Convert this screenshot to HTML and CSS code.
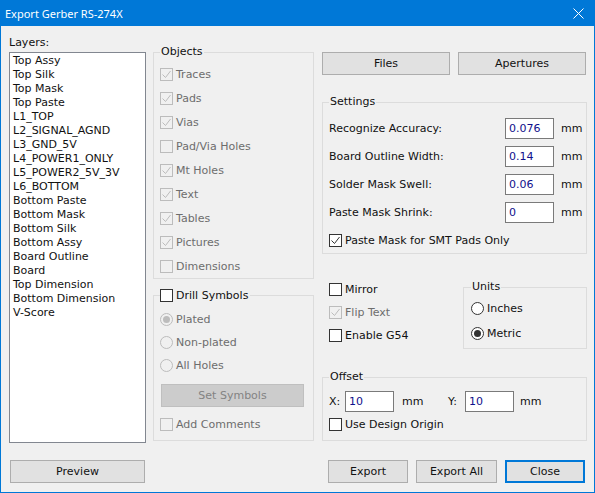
FILE: index.html
```html
<!DOCTYPE html>
<html>
<head>
<meta charset="utf-8">
<link rel="stylesheet" href="styles.css">
</head>
<body>
<div class="window">
  <div class="titlebar">
    <span class="title">Export Gerber RS-274X</span>
    <svg class="close-x" width="11" height="11" viewBox="0 0 11 11"><path d="M0.5 0.5 L10.5 10.5 M10.5 0.5 L0.5 10.5" stroke="#fff" stroke-width="1" fill="none"/></svg>
  </div>
  <div class="content">
    <div class="col col-layers">
      <div class="label">Layers:</div>
      <ul class="listbox">
        <li>Top Assy</li>
        <li>Top Silk</li>
        <li>Top Mask</li>
        <li>Top Paste</li>
        <li>L1_TOP</li>
        <li>L2_SIGNAL_AGND</li>
        <li>L3_GND_5V</li>
        <li>L4_POWER1_ONLY</li>
        <li>L5_POWER2_5V_3V</li>
        <li>L6_BOTTOM</li>
        <li>Bottom Paste</li>
        <li>Bottom Mask</li>
        <li>Bottom Silk</li>
        <li>Bottom Assy</li>
        <li>Board Outline</li>
        <li>Board</li>
        <li>Top Dimension</li>
        <li>Bottom Dimension</li>
        <li>V-Score</li>
      </ul>
      <div class="btn btn-preview">Preview</div>
    </div>

    <div class="col col-objects">
      <fieldset class="group group-objects">
        <legend>Objects</legend>
        <div class="check disabled"><span class="box"><svg viewBox="0 0 11 11"><path d="M1.5 5.5 L4.5 8.5 L9.5 2" /></svg></span>Traces</div>
        <div class="check disabled"><span class="box"><svg viewBox="0 0 11 11"><path d="M1.5 5.5 L4.5 8.5 L9.5 2" /></svg></span>Pads</div>
        <div class="check disabled"><span class="box"><svg viewBox="0 0 11 11"><path d="M1.5 5.5 L4.5 8.5 L9.5 2" /></svg></span>Vias</div>
        <div class="check disabled"><span class="box"></span>Pad/Via Holes</div>
        <div class="check disabled"><span class="box"><svg viewBox="0 0 11 11"><path d="M1.5 5.5 L4.5 8.5 L9.5 2" /></svg></span>Mt Holes</div>
        <div class="check disabled"><span class="box"><svg viewBox="0 0 11 11"><path d="M1.5 5.5 L4.5 8.5 L9.5 2" /></svg></span>Text</div>
        <div class="check disabled"><span class="box"><svg viewBox="0 0 11 11"><path d="M1.5 5.5 L4.5 8.5 L9.5 2" /></svg></span>Tables</div>
        <div class="check disabled"><span class="box"><svg viewBox="0 0 11 11"><path d="M1.5 5.5 L4.5 8.5 L9.5 2" /></svg></span>Pictures</div>
        <div class="check disabled"><span class="box"></span>Dimensions</div>
      </fieldset>

      <fieldset class="group group-drill">
        <legend><span class="check legend-check"><span class="box"></span>Drill Symbols</span></legend>
        <div class="radio disabled"><span class="circle"><span class="dot"></span></span>Plated</div>
        <div class="radio disabled"><span class="circle"></span>Non-plated</div>
        <div class="radio disabled"><span class="circle"></span>All Holes</div>
        <div class="btn btn-disabled btn-symbols">Set Symbols</div>
        <div class="check disabled add-comments"><span class="box"></span>Add Comments</div>
      </fieldset>
    </div>

    <div class="col col-settings">
      <div class="top-buttons">
        <div class="btn btn-top">Files</div>
        <div class="btn btn-top">Apertures</div>
      </div>

      <fieldset class="group group-settings">
        <legend>Settings</legend>
        <div class="setting-row"><span>Recognize Accuracy:</span><span class="field">0.076</span><span class="unit">mm</span></div>
        <div class="setting-row"><span>Board Outline Width:</span><span class="field">0.14</span><span class="unit">mm</span></div>
        <div class="setting-row"><span>Solder Mask Swell:</span><span class="field">0.06</span><span class="unit">mm</span></div>
        <div class="setting-row"><span>Paste Mask Shrink:</span><span class="field">0</span><span class="unit">mm</span></div>
        <div class="check check-smt"><span class="box"><svg viewBox="0 0 11 11"><path d="M1.5 5.5 L4.5 8.5 L9.5 2" /></svg></span>Paste Mask for SMT Pads Only</div>
      </fieldset>

      <div class="options">
        <div class="options-checks">
          <div class="check row23"><span class="box"></span>Mirror</div>
          <div class="check disabled row23"><span class="box"><svg viewBox="0 0 11 11"><path d="M1.5 5.5 L4.5 8.5 L9.5 2" /></svg></span>Flip Text</div>
          <div class="check row23"><span class="box"></span>Enable G54</div>
        </div>
        <fieldset class="group group-units">
          <legend>Units</legend>
          <div class="radio row25"><span class="circle"></span>Inches</div>
          <div class="radio row25"><span class="circle"><span class="dot"></span></span>Metric</div>
        </fieldset>
      </div>

      <fieldset class="group group-offset">
        <legend>Offset</legend>
        <div class="offset-row">
          <span>X:</span><span class="field">10</span><span class="unit-x">mm</span>
          <span>Y:</span><span class="field">10</span><span class="unit-y">mm</span>
        </div>
        <div class="check row23"><span class="box"></span>Use Design Origin</div>
      </fieldset>

      <div class="footer">
        <div class="btn btn-foot">Export</div>
        <div class="btn btn-foot btn-wide">Export All</div>
        <div class="btn btn-foot btn-default">Close</div>
      </div>
    </div>
  </div>
</div>
</body>
</html>
```

FILE: styles.css
```css
html, body {
  margin: 0;
  padding: 0;
  background: #f0f0f0;
}
body {
  font-family: "DejaVu Sans", sans-serif;
  font-size: 11px;
  line-height: 13px;
  color: #111;
}
.window {
  width: 595px;
  height: 493px;
  box-sizing: border-box;
  border: 1px solid #0078d7;
  border-top: none;
  background: #f0f0f0;
  display: flex;
  flex-direction: column;
}
.titlebar {
  height: 26px;
  flex: none;
  background: #0078d7;
  color: #fff;
  display: flex;
  align-items: center;
  justify-content: space-between;
  padding: 0 10px 0 4px;
  font-family: "Noto Sans", sans-serif;
  font-size: 11px;
}
.close-x {
  display: block;
}
.content {
  display: flex;
  padding: 0 7px 0 8px;
}
.col {
  display: flex;
  flex-direction: column;
}
.col-layers {
  width: 137px;
  margin-right: 7px;
  padding-top: 10px;
}
.col-objects {
  width: 161px;
  margin-right: 8px;
  padding-top: 20px;
}
.col-settings {
  width: 265px;
  padding-top: 26px;
}
.label {
  height: 13px;
  margin-bottom: 3px;
}
.listbox {
  list-style: none;
  margin: 0;
  height: 391px;
  box-sizing: border-box;
  border: 1px solid #828790;
  background: #fff;
  padding: 1px 0 0 3px;
}
.listbox li {
  line-height: 14px;
  height: 14px;
  white-space: nowrap;
}
.btn {
  height: 23px;
  box-sizing: border-box;
  border: 1px solid #adadad;
  background: #e1e1e1;
  display: flex;
  align-items: center;
  justify-content: center;
}
.btn-preview {
  margin: 17px 1px 0;
}
.btn-disabled {
  background: #cccccc;
  border-color: #bfbfbf;
  color: #838383;
}
.group {
  margin: 0;
  border: 1px solid #dcdcdc;
  padding: 0 0 0 6px;
  min-width: 0;
}
.group legend {
  padding: 0 1px;
  line-height: 12px;
}
.group-objects {
  padding-top: 4px;
}
.group-drill {
  margin-top: 10px;
  padding-top: 6px;
  padding-bottom: 4px;
}
.group-drill legend {
  padding: 0 2px 0 0;
  line-height: 13px;
}
.check, .radio {
  display: flex;
  align-items: center;
  height: 24px;
  gap: 3px;
  white-space: nowrap;
}
.legend-check {
  height: 13px;
}
.radio {
  height: 23px;
}
.box {
  width: 13px;
  height: 13px;
  box-sizing: border-box;
  border: 1px solid #333333;
  background: #fff;
  flex: none;
}
.box svg {
  display: block;
  width: 11px;
  height: 11px;
  fill: none;
  stroke: #333333;
  stroke-width: 1;
}
.disabled {
  color: #6d6d6d;
}
.disabled .box {
  border-color: #bcbcbc;
  background: #f0f0f0;
}
.disabled .box svg {
  stroke: #bcbcbc;
}
.circle {
  width: 13px;
  height: 13px;
  box-sizing: border-box;
  border: 1px solid #333333;
  border-radius: 50%;
  background: #fff;
  flex: none;
  display: flex;
  align-items: center;
  justify-content: center;
}
.dot {
  width: 7px;
  height: 7px;
  border-radius: 50%;
  background: #333333;
}
.disabled .circle {
  border-color: #bcbcbc;
  background: #f0f0f0;
}
.disabled .dot {
  background: #bcbcbc;
}
.btn-symbols {
  margin: 7px 0 0 1px;
  width: 143px;
}
.add-comments {
  margin-top: 6px;
  height: 23px;
}
.top-buttons {
  display: flex;
  gap: 8px;
}
.btn-top {
  width: 128px;
}
.group-settings {
  margin-top: 21px;
  padding: 6px 2px 1px 6px;
}
.setting-row {
  display: grid;
  grid-template-columns: 176px 49px auto;
  align-items: center;
  height: 28px;
}
.field {
  height: 21px;
  box-sizing: border-box;
  border: 1px solid #7a7a7a;
  background: #fff;
  color: #10108c;
  padding-left: 3px;
  line-height: 19px;
  width: 49px;
}
.unit {
  margin-left: 7px;
}
.check-smt {
  margin-top: 2px;
}
.options {
  display: flex;
  margin-top: 24px;
}
.options-checks {
  flex: 1;
  padding-left: 7px;
}
.row23 {
  height: 23px;
}
.row25 {
  height: 25px;
}
.group-units {
  width: 124px;
  box-sizing: border-box;
  margin-top: 3px;
  padding: 3px 0 2px 7px;
}
.group-offset {
  margin-top: 22px;
  padding: 7px 0 4px 6px;
}
.offset-row {
  display: grid;
  grid-template-columns: 16px 49px 54px 17px 49px auto;
  align-items: center;
  height: 23px;
}
.unit-x {
  padding-left: 8px;
}
.unit-y {
  padding-left: 6px;
}
.footer {
  display: flex;
  justify-content: flex-end;
  gap: 8px;
  margin: 19px 2px 0 0;
}
.btn-foot {
  width: 80px;
}
.btn-wide {
  width: 81px;
}
.btn-default {
  border: 2px solid #0078d7;
}
```
